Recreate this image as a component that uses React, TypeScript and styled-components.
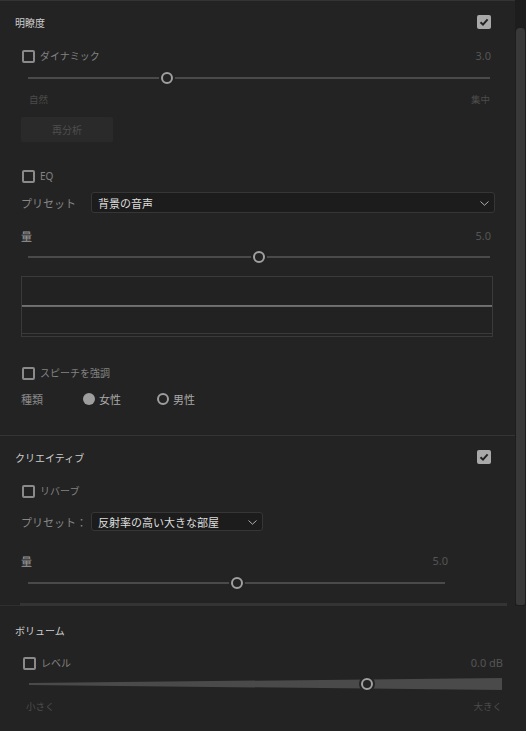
import React from 'react';
import styled, { createGlobalStyle } from 'styled-components';

const GlobalStyle = createGlobalStyle`
  html, body { margin: 0; padding: 0; background: #232323; }
  body {
    font-family: "Noto Sans", "Noto Sans CJK JP", sans-serif;
    font-size: 11px;
    color: #888;
  }
  * { box-sizing: border-box; }
`;

const Panel = styled.div`
  width: 526px;
  height: 731px;
  background: #232323;
  display: flex;
  flex-direction: column;
  overflow: hidden;
`;

const ScrollArea = styled.div`
  display: flex;
  height: 606px;
  flex: none;
`;

const ScrollContent = styled.div`
  flex: 1;
  display: flex;
  flex-direction: column;
  border-top: 1px solid #343434;
  overflow: hidden;
`;

const VScroll = styled.div`
  width: 11px;
  background: #1d1d1d;
  display: flex;
  flex-direction: column;
`;

const VThumb = styled.div`
  flex: 1;
  margin: 28px 1px 1px 1px;
  background: #393939;
  border-radius: 4px 4px 2px 2px;
`;

const HBar = styled.div`
  margin-top: auto;
  height: 3px;
  display: flex;
  align-items: flex-end;
`;

const HTrack = styled.div`
  width: 20px;
  height: 1px;
  background: #2f2f2f;
`;

const HThumb = styled.div`
  flex: 1;
  height: 3px;
  margin-right: 8px;
  background: #343434;
`;

const Section = styled.section<{ $divider?: boolean; $right?: number }>`
  display: flex;
  flex-direction: column;
  padding: 0 ${p => p.$right ?? 24}px 0 15px;
  ${p => (p.$divider ? 'border-bottom: 1px solid #343434;' : '')}
`;

const Header = styled.div<{ $mt: number }>`
  display: flex;
  align-items: center;
  justify-content: space-between;
  height: 14px;
  margin-top: ${p => p.$mt}px;
`;

const Title = styled.span`
  font-size: 10px;
  color: #cdcdcd;
  line-height: 14px;
  padding-top: 2px;
`;

const Body = styled.div<{ $pb?: number; $left?: number }>`
  display: flex;
  flex-direction: column;
  padding-left: ${p => p.$left ?? 6}px;
  padding-bottom: ${p => p.$pb ?? 0}px;
`;

const Box = styled.span<{ $checked?: boolean }>`
  flex: none;
  width: ${p => (p.$checked ? 14 : 13)}px;
  height: ${p => (p.$checked ? 14 : 13)}px;
  margin-left: ${p => (p.$checked ? 0 : 1)}px;
  border-radius: 2px;
  display: flex;
  align-items: center;
  justify-content: center;
  border: ${p => (p.$checked ? 'none' : '2px solid #8a8a8a')};
  background: ${p => (p.$checked ? '#a9a9a9' : 'transparent')};
`;

const CheckRow = styled.div<{ $mt: number; $mr?: number }>`
  display: flex;
  align-items: center;
  gap: 5px;
  height: 14px;
  margin-top: ${p => p.$mt}px;
  margin-right: ${p => p.$mr ?? 0}px;
`;

const CheckLabel = styled.span`
  font-size: 10px;
  color: #828282;
  line-height: 14px;
`;

const Value = styled.span`
  margin-left: auto;
  font-size: 11px;
  color: #555;
  line-height: 14px;
`;

const SliderTrack = styled.div<{ $mt: number; $mr?: number }>`
  position: relative;
  height: 12px;
  margin: ${p => p.$mt}px ${p => p.$mr ?? 1}px 0 7px;
  &::before {
    content: '';
    position: absolute;
    left: 0;
    right: 0;
    top: 5px;
    height: 2px;
    background: #4a4a4a;
  }
`;

const Thumb = styled.span<{ $pos: number }>`
  position: absolute;
  top: 0;
  left: ${p => p.$pos}%;
  transform: translateX(-50%);
  width: 12px;
  height: 12px;
  border-radius: 50%;
  border: 2.5px solid #a0a0a0;
  background: #232323;
  box-shadow: 0 0 0 2px #232323;
`;

const ScaleRow = styled.div<{ $mt: number; $ml?: number }>`
  display: flex;
  justify-content: space-between;
  height: 14px;
  margin: ${p => p.$mt}px 1px 0 ${p => p.$ml ?? 8}px;
  font-size: 9.5px;
  color: #4c4c4c;
  line-height: 14px;
`;

const Button = styled.button`
  margin-top: 10px;
  width: 92px;
  height: 25px;
  border: none;
  border-radius: 2px;
  background: #2a2a2a;
  color: #4e4e4e;
  font-family: inherit;
  font-size: 10px;
  padding: 0;
`;

const PresetRow = styled.div<{ $mt: number }>`
  display: flex;
  align-items: center;
  margin-top: ${p => p.$mt}px;
`;

const FieldLabel = styled.span`
  width: 70px;
  flex: none;
  font-size: 11px;
  color: #878787;
`;

const Select = styled.div<{ $h: number; $w?: number }>`
  display: flex;
  align-items: center;
  justify-content: space-between;
  height: ${p => p.$h}px;
  ${p => (p.$w ? `width: ${p.$w}px;` : 'flex: 1; margin-right: -4px;')}
  padding: 1px 5px 0 6px;
  background: #1c1c1c;
  border: 1px solid #363636;
  border-radius: 3px;
  color: #dcdcdc;
  font-size: 11px;
`;

const AmountRow = styled.div<{ $mt: number; $mr?: number }>`
  display: flex;
  align-items: center;
  justify-content: space-between;
  height: 14px;
  margin-top: ${p => p.$mt}px;
  margin-right: ${p => p.$mr ?? 0}px;
  font-size: 11px;
  color: #9a9a9a;
`;

const Graph = styled.div`
  margin: 13px -2px 0 0;
  height: 61px;
  border: 1px solid #3a3a3a;
  background: #222;
  display: flex;
  flex-direction: column;
`;

const Plot = styled.svg`
  display: block;
  width: 100%;
  height: 57px;
  border-bottom: 1px solid #3a3a3a;
`;

const RadioRow = styled.div`
  display: flex;
  align-items: center;
  height: 16px;
  margin-top: 11px;
`;

const KindLabel = styled.span`
  width: 62px;
  font-size: 11px;
  color: #8a8a8a;
`;

const Option = styled.span`
  display: flex;
  align-items: center;
  gap: 4px;
  min-width: 74px;
  font-size: 11px;
  color: #a8a8a8;
`;

const Dot = styled.span<{ $on?: boolean }>`
  width: 12px;
  height: 12px;
  border-radius: 50%;
  background: ${p => (p.$on ? '#9e9e9e' : 'transparent')};
  border: ${p => (p.$on ? 'none' : '2px solid #9e9e9e')};
`;

const VolTrack = styled.div`
  position: relative;
  height: 12px;
  margin: 8px 1px 0 7px;
  &::before {
    content: '';
    position: absolute;
    inset: 0;
    background: #4a4a4a;
    clip-path: polygon(0 42%, 100% 0, 100% 100%, 0 58%);
  }
`;

const Check = () => (
  <svg width="10" height="10" viewBox="0 0 10 10">
    <path d="M1.5 5.2 L4 7.6 L8.6 2.4" fill="none" stroke="#222" strokeWidth="2" />
  </svg>
);

const Chevron = () => (
  <svg width="9" height="5" viewBox="0 0 9 5">
    <path d="M0.5 0.5 L4.5 4.2 L8.5 0.5" fill="none" stroke="#b0b0b0" strokeWidth="1" />
  </svg>
);

const App: React.FC = () => (
  <>
    <GlobalStyle />
    <Panel>
      <ScrollArea>
        <ScrollContent>
          <Section $divider>
            <Header $mt={14}>
              <Title>明瞭度</Title>
              <Box $checked><Check /></Box>
            </Header>
            <Body $pb={28}>
              <CheckRow $mt={20}>
                <Box />
                <CheckLabel>ダイナミック</CheckLabel>
                <Value>3.0</Value>
              </CheckRow>
              <SliderTrack $mt={9}>
                <Thumb $pos={30} />
              </SliderTrack>
              <ScaleRow $mt={9}>
                <span>自然</span>
                <span>集中</span>
              </ScaleRow>
              <Button>再分析</Button>
              <CheckRow $mt={27}>
                <Box />
                <CheckLabel>EQ</CheckLabel>
              </CheckRow>
              <PresetRow $mt={9}>
                <FieldLabel>プリセット</FieldLabel>
                <Select $h={21}>
                  <span>背景の音声</span>
                  <Chevron />
                </Select>
              </PresetRow>
              <AmountRow $mt={16}>
                <span>量</span>
                <Value>5.0</Value>
              </AmountRow>
              <SliderTrack $mt={8}>
                <Thumb $pos={50} />
              </SliderTrack>
              <Graph>
                <Plot viewBox="0 0 470 57" preserveAspectRatio="none">
                  <line x1="0" y1="29.5" x2="470" y2="29.5" stroke="#bcbcbc" strokeWidth="1" />
                </Plot>
              </Graph>
              <CheckRow $mt={29}>
                <Box />
                <CheckLabel>スピーチを強調</CheckLabel>
              </CheckRow>
              <RadioRow>
                <KindLabel>種類</KindLabel>
                <Option><Dot $on />女性</Option>
                <Option><Dot />男性</Option>
              </RadioRow>
            </Body>
          </Section>

          <Section>
            <Header $mt={14}>
              <Title>クリエイティブ</Title>
              <Box $checked><Check /></Box>
            </Header>
            <Body>
              <CheckRow $mt={20}>
                <Box />
                <CheckLabel>リバーブ</CheckLabel>
              </CheckRow>
              <PresetRow $mt={14}>
                <FieldLabel>プリセット：</FieldLabel>
                <Select $h={19} $w={172}>
                  <span>反射率の高い大きな部屋</span>
                  <Chevron />
                </Select>
              </PresetRow>
              <AmountRow $mt={23} $mr={43}>
                <span>量</span>
                <Value>5.0</Value>
              </AmountRow>
              <SliderTrack $mt={9} $mr={46}>
                <Thumb $pos={50} />
              </SliderTrack>
            </Body>
          </Section>

          <HBar>
            <HTrack />
            <HThumb />
          </HBar>
        </ScrollContent>
        <VScroll>
          <VThumb />
        </VScroll>
      </ScrollArea>

      <Section $right={23}>
        <Header $mt={17}>
          <Title>ボリューム</Title>
        </Header>
        <Body $left={7}>
          <CheckRow $mt={19}>
            <Box />
            <CheckLabel>レベル</CheckLabel>
            <Value>0.0 dB</Value>
          </CheckRow>
          <VolTrack>
            <Thumb $pos={71.5} />
          </VolTrack>
          <ScaleRow $mt={10} $ml={4}>
            <span>小さく</span>
            <span>大きく</span>
          </ScaleRow>
        </Body>
      </Section>
    </Panel>
  </>
);

export default App;
